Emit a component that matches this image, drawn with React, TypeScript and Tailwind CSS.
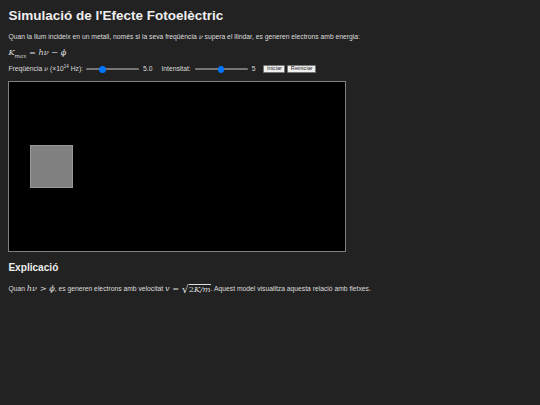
import { useState } from 'react'

const mathFont = "font-['DejaVu_Serif','Liberation_Serif',serif] italic"

function Slider({ min, max, value }: { min: number; max: number; value: number }) {
    const pct = ((value - min) / (max - min)) * 100
    return (
        <div className="relative w-[53px] h-[7px] flex items-center mx-[1px]">
            <div className="w-full h-[2.5px] rounded-full bg-[#efefef] border-[0.5px] border-[#767676] overflow-hidden">
                <div className="h-full bg-[#0075ff]" style={{ width: `${pct}%` }} />
            </div>
            <div
                className="absolute top-[0.5px] w-[6.5px] h-[6.5px] rounded-full bg-[#0075ff]"
                style={{ left: `calc(${pct}% - ${(pct / 100) * 6.5}px)` }}
            />
        </div>
    )
}

export default function App() {
    const [freq] = useState(5)
    const [intensity] = useState(5)

    return (
        <div className="min-h-[405px] bg-[#222222] text-[#dddddd] px-[8.4px] pt-[8.4px] font-['Liberation_Sans',Arial,sans-serif] text-[6.75px] leading-[1.15]">
            <h1 className="text-[13.5px] font-bold text-[#eeeeee] leading-[1.15]">
                Simulació de l'Efecte Fotoelèctric
            </h1>

            <p className="mt-[9px]">
                Quan la llum incideix en un metall, només si la seva freqüència <span className={mathFont}>ν</span> supera el
                llindar, es generen electrons amb energia:
            </p>

            <div className={`mt-[6px] text-[8.2px] ${mathFont}`}>
                K<sub className="text-[5.6px] align-[-1.5px]">max</sub>
                <span className="not-italic"> = </span>hν<span className="not-italic"> − </span>ϕ
            </div>

            <div className="mt-[7px] flex items-center h-[10px]">
                <span>
                    Freqüència <span className={mathFont}>ν</span> (×10<sup className="text-[4.5px]">14</sup> Hz):
                </span>
                <span className="ml-[2px]">
                    <Slider min={1} max={15} value={freq} />
                </span>
                <span className="ml-[3px]">{freq.toFixed(1)}</span>
                <span className="ml-[9px]">Intensitat:</span>
                <span className="ml-[3px]">
                    <Slider min={0} max={10} value={intensity} />
                </span>
                <span className="ml-[3px]">{intensity}</span>
                <button className="ml-[8px] h-[8.5px] px-[2.5px] bg-[#efefef] text-[#222] text-[5.6px] border-[0.5px] border-[#767676] rounded-[1px] leading-none">
                    Iniciar
                </button>
                <button className="ml-[2px] h-[8.5px] px-[2.5px] bg-[#efefef] text-[#222] text-[5.6px] border-[0.5px] border-[#767676] rounded-[1px] leading-none">
                    Reiniciar
                </button>
            </div>

            <div className="mt-[7px] w-[338px] h-[171px] bg-black border border-[#808080] pl-[21px] pt-[63px]">
                <div className="w-[43px] h-[43px] bg-[#808080] border-[0.5px] border-[#999]" />
            </div>

            <h2 className="mt-[10px] text-[10.1px] font-bold text-[#eeeeee]">Explicació</h2>

            <p className="mt-[10px] flex items-center flex-wrap">
                <span>Quan&nbsp;</span>
                <span className={`${mathFont} text-[8.2px]`}>hν</span>
                <span className="font-['DejaVu_Serif',serif] text-[8.2px]">&nbsp;&gt;&nbsp;</span>
                <span className={`${mathFont} text-[8.2px]`}>ϕ</span>
                <span>, es generen electrons amb velocitat&nbsp;</span>
                <span className={`${mathFont} text-[8.2px]`}>v</span>
                <span className="font-['DejaVu_Serif',serif] text-[8.2px]">&nbsp;=&nbsp;</span>
                <span className="font-['DejaVu_Serif',serif] text-[11px] leading-none">√</span>
                <span className={`${mathFont} text-[8.2px] border-t-[0.6px] border-[#dddddd] leading-[1.1]`}>
                    <span className="not-italic">2</span>K/m
                </span>
                <span>. Aquest model visualitza aquesta relació amb fletxes.</span>
            </p>
        </div>
    )
}
